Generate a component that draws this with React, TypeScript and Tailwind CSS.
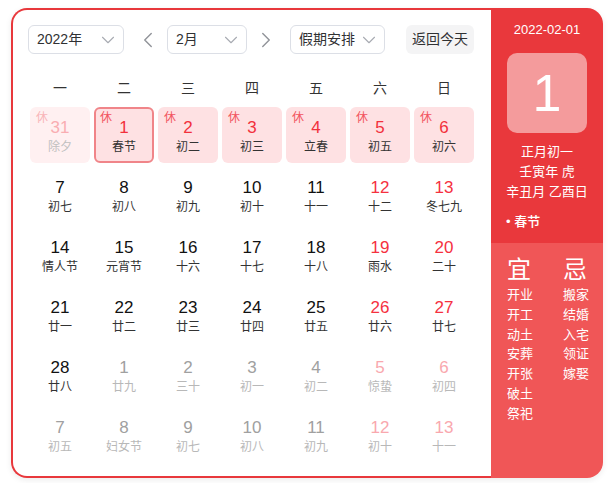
import { ChevronDown, ChevronLeft, ChevronRight } from "lucide-react";

type Day = {
  n: number;
  lunar: string;
  kind: "prev" | "cur" | "next";
  rest?: boolean;
  selected?: boolean;
};

const weekdays = ["一", "二", "三", "四", "五", "六", "日"];

const rows: Day[][] = [
  [
    { n: 31, lunar: "除夕", kind: "prev", rest: true },
    { n: 1, lunar: "春节", kind: "cur", rest: true, selected: true },
    { n: 2, lunar: "初二", kind: "cur", rest: true },
    { n: 3, lunar: "初三", kind: "cur", rest: true },
    { n: 4, lunar: "立春", kind: "cur", rest: true },
    { n: 5, lunar: "初五", kind: "cur", rest: true },
    { n: 6, lunar: "初六", kind: "cur", rest: true },
  ],
  [
    { n: 7, lunar: "初七", kind: "cur" },
    { n: 8, lunar: "初八", kind: "cur" },
    { n: 9, lunar: "初九", kind: "cur" },
    { n: 10, lunar: "初十", kind: "cur" },
    { n: 11, lunar: "十一", kind: "cur" },
    { n: 12, lunar: "十二", kind: "cur" },
    { n: 13, lunar: "冬七九", kind: "cur" },
  ],
  [
    { n: 14, lunar: "情人节", kind: "cur" },
    { n: 15, lunar: "元宵节", kind: "cur" },
    { n: 16, lunar: "十六", kind: "cur" },
    { n: 17, lunar: "十七", kind: "cur" },
    { n: 18, lunar: "十八", kind: "cur" },
    { n: 19, lunar: "雨水", kind: "cur" },
    { n: 20, lunar: "二十", kind: "cur" },
  ],
  [
    { n: 21, lunar: "廿一", kind: "cur" },
    { n: 22, lunar: "廿二", kind: "cur" },
    { n: 23, lunar: "廿三", kind: "cur" },
    { n: 24, lunar: "廿四", kind: "cur" },
    { n: 25, lunar: "廿五", kind: "cur" },
    { n: 26, lunar: "廿六", kind: "cur" },
    { n: 27, lunar: "廿七", kind: "cur" },
  ],
  [
    { n: 28, lunar: "廿八", kind: "cur" },
    { n: 1, lunar: "廿九", kind: "next" },
    { n: 2, lunar: "三十", kind: "next" },
    { n: 3, lunar: "初一", kind: "next" },
    { n: 4, lunar: "初二", kind: "next" },
    { n: 5, lunar: "惊蛰", kind: "next" },
    { n: 6, lunar: "初四", kind: "next" },
  ],
  [
    { n: 7, lunar: "初五", kind: "next" },
    { n: 8, lunar: "妇女节", kind: "next" },
    { n: 9, lunar: "初七", kind: "next" },
    { n: 10, lunar: "初八", kind: "next" },
    { n: 11, lunar: "初九", kind: "next" },
    { n: 12, lunar: "初十", kind: "next" },
    { n: 13, lunar: "十一", kind: "next" },
  ],
];

const yi = ["开业", "开工", "动土", "安葬", "开张", "破土", "祭祀"];
const ji = ["搬家", "结婚", "入宅", "领证", "嫁娶"];

function Select({ label, width }: { label: string; width: string }) {
  return (
    <div
      className={`${width} h-[29px] flex items-center justify-between pl-[8px] pr-[4px] border border-[#dcdfe6] rounded-[6px] text-[14px] text-[#303133]`}
    >
      <span>{label}</span>
      <ChevronDown size={22} strokeWidth={1.2} className="text-[#a8abb2]" />
    </div>
  );
}

function Cell({ d, col }: { d: Day; col: number }) {
  const weekend = col >= 5;
  let box = "";
  let num = "text-[#111]";
  let lunar = "text-[#333]";
  let restColor = "text-[#f2545e]";
  if (d.kind === "prev") {
    box = "bg-[#fff0f1]";
    num = "text-[#f9adb2]";
    lunar = "text-[#c0c0c0]";
    restColor = "text-[#f9b5b9]";
  } else if (d.rest) {
    box = d.selected
      ? "bg-[#fee1e3] border-2 border-[#f08589]"
      : "bg-[#fee1e3]";
    num = "text-[#f2303c]";
  } else if (d.kind === "next") {
    num = weekend ? "text-[#f9a8ae]" : "text-[#a0a0a0]";
    lunar = "text-[#b8b8b8]";
  } else if (weekend) {
    num = "text-[#f5313f]";
  }
  return (
    <div className="p-[2px] h-[60px]">
      <div
        className={`relative h-[56px] rounded-[6px] flex flex-col items-center ${box} ${
          d.selected ? "pt-[9px]" : "pt-[11px]"
        }`}
      >
        {d.rest && (
          <span
            className={`absolute ${
              d.selected ? "left-[4px] top-[2px]" : "left-[6px] top-[4px]"
            } text-[12px] leading-[14px] ${restColor}`}
          >
            休
          </span>
        )}
        <span className={`text-[17px] leading-[20px] ${num}`}>{d.n}</span>
        <span className={`text-[12px] leading-[18px] ${lunar}`}>{d.lunar}</span>
      </div>
    </div>
  );
}

export default function App() {
  return (
    <div
      className="pt-[8px] pl-[11px] bg-white min-h-screen"
      style={{ fontFamily: '"Liberation Sans", "Noto Sans CJK SC", sans-serif' }}
    >
      <div className="flex w-[592px] h-[470px] rounded-[16px] shadow-[0_2px_6px_rgba(0,0,0,0.08)]">
        {/* left */}
        <div className="w-[480px] h-full border-2 border-r-0 border-[#e8383c] rounded-l-[16px] pl-[15px] pr-[15px] pt-[15px] bg-white">
          <div className="flex items-center">
            <Select label="2022年" width="w-[96px]" />
            <ChevronLeft size={26} strokeWidth={1.3} className="ml-[11px] text-[#909399]" />
            <Select label="2月" width="w-[80px] ml-[6px]" />
            <ChevronRight size={26} strokeWidth={1.3} className="ml-[6px] text-[#909399]" />
            <Select label="假期安排" width="w-[95px] ml-[11px]" />
            <button className="ml-[21px] w-[68px] h-[29px] rounded-[6px] bg-[#f4f4f5] text-[14px] text-[#303133]">
              返回今天
            </button>
          </div>

          <div className="grid grid-cols-7 mt-[20px] h-[28px] items-center text-[14px] text-[#333]">
            {weekdays.map((w) => (
              <div key={w} className="text-center">
                {w}
              </div>
            ))}
          </div>

          <div className="grid grid-cols-7 mt-[3px]">
            {rows.map((r, ri) =>
              r.map((d, ci) => <Cell key={`${ri}-${ci}`} d={d} col={ci} />)
            )}
          </div>
        </div>

        {/* right */}
        <div className="w-[112px] h-full rounded-r-[16px] overflow-hidden flex flex-col text-white">
          <div className="h-[235px] bg-[#e9383c] flex flex-col items-center pt-[14px]">
            <div className="text-[13px] leading-[16px] font-medium">2022-02-01</div>
            <div className="mt-[15px] w-[80px] h-[80px] rounded-[10px] bg-[#f49b9c] flex items-center justify-center text-[52px] leading-none">
              1
            </div>
            <div className="mt-[9px] text-[13px] leading-[20px] text-center">
              <div>正月初一</div>
              <div>壬寅年 虎</div>
              <div>辛丑月 乙酉日</div>
            </div>
            <div className="self-start pl-[15px] mt-[10px] text-[13px] leading-[20px] font-medium">
              • 春节
            </div>
          </div>
          <div className="flex-1 bg-[#f05657] flex pl-[16px] pt-[12px]">
            <div className="w-[56px] flex flex-col">
              <div className="text-[24px] leading-[30px]">宜</div>
              <div className="text-[13px] leading-[19.8px]">
                {yi.map((t) => (
                  <div key={t}>{t}</div>
                ))}
              </div>
            </div>
            <div className="w-[40px] flex flex-col">
              <div className="text-[24px] leading-[30px]">忌</div>
              <div className="text-[13px] leading-[19.8px]">
                {ji.map((t) => (
                  <div key={t}>{t}</div>
                ))}
              </div>
            </div>
          </div>
        </div>
      </div>
    </div>
  );
}
